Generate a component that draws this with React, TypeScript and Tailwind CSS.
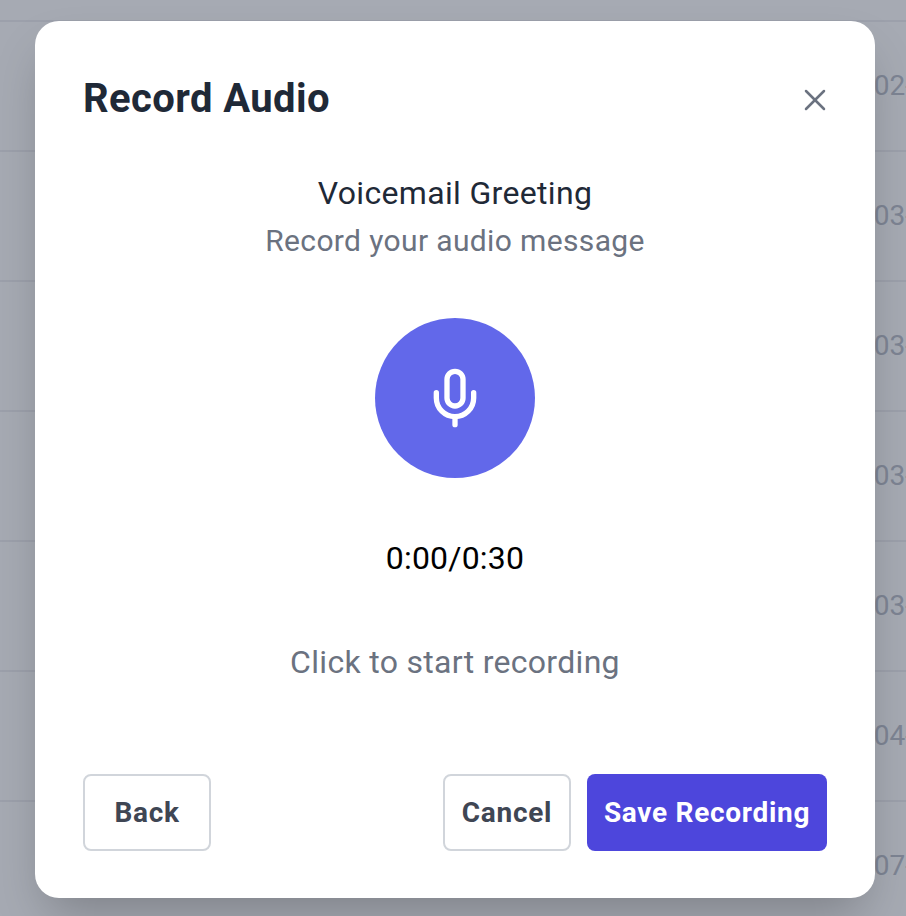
import { Mic, X } from 'lucide-react';

const rows = ['2021-02-', '2021-03-', '2021-03-', '2021-03-', '2021-03-', '2021-04-', '2021-07-'];

export default function App() {
    return (
        <div className="relative h-[916px] w-[906px] overflow-hidden bg-white font-['Roboto',sans-serif]">
            <div className="pt-[20px]">
                {rows.map((date, i) => (
                    <div key={i} className="flex h-[130px] items-center justify-end overflow-hidden border-t-2 border-gray-200">
                        <span className="-mr-[7px] whitespace-nowrap text-[28px] text-gray-400">{date}</span>
                    </div>
                ))}
            </div>
            <div className="absolute inset-0 bg-[#6b7280]/60" />
            <div className="absolute left-[35px] top-[21px] flex h-[877px] w-[840px] flex-col rounded-[24px] bg-white px-12 pb-[47px] pt-12 shadow-[0_25px_50px_-12px_rgba(0,0,0,0.25)]">
                <div className="flex h-[60px] items-center justify-between">
                    <h2 className="text-[40px] leading-[60px] font-bold tracking-[0.4px] text-[#1f2937]">Record Audio</h2>
                    <X className="-mr-[6px] mt-[2px] h-9 w-9 text-[#6b7280]" strokeWidth={1.7} />
                </div>
                <div className="mt-[40px] flex flex-1 flex-col items-center">
                    <p className="text-[32px] leading-[48px] tracking-[0.33px] text-[#1f2937]">Voicemail Greeting</p>
                    <p className="text-[30px] leading-[48px] tracking-[0.36px] text-[#6b7280]">Record your audio message</p>
                    <div className="mt-[53px] flex h-40 w-40 items-center justify-center rounded-full bg-[#6268ea]">
                        <Mic className="h-[64px] w-[64px] text-white" strokeWidth={2} />
                    </div>
                    <p className="mt-[58px] text-[32px] leading-[44px] tracking-[0.2px] text-black">0:00/0:30</p>
                    <p className="mt-[60px] text-[32px] leading-[44px] tracking-[0.3px] text-[#6b7280]">Click to start recording</p>
                </div>
                <div className="flex items-center justify-between">
                    <button className="h-[77px] w-[128px] rounded-lg border-2 border-[#d1d5db] bg-white text-[28px] font-bold tracking-[0.7px] text-[#3f4654]">Back</button>
                    <div className="flex gap-4">
                        <button className="h-[77px] w-[128px] rounded-lg border-2 border-[#d1d5db] bg-white text-[28px] font-bold tracking-[0.7px] text-[#3f4654]">Cancel</button>
                        <button className="h-[77px] w-[240px] rounded-lg bg-[#4d46dc] text-[28px] font-bold tracking-[0.7px] text-white">Save Recording</button>
                    </div>
                </div>
            </div>
        </div>
    );
}
